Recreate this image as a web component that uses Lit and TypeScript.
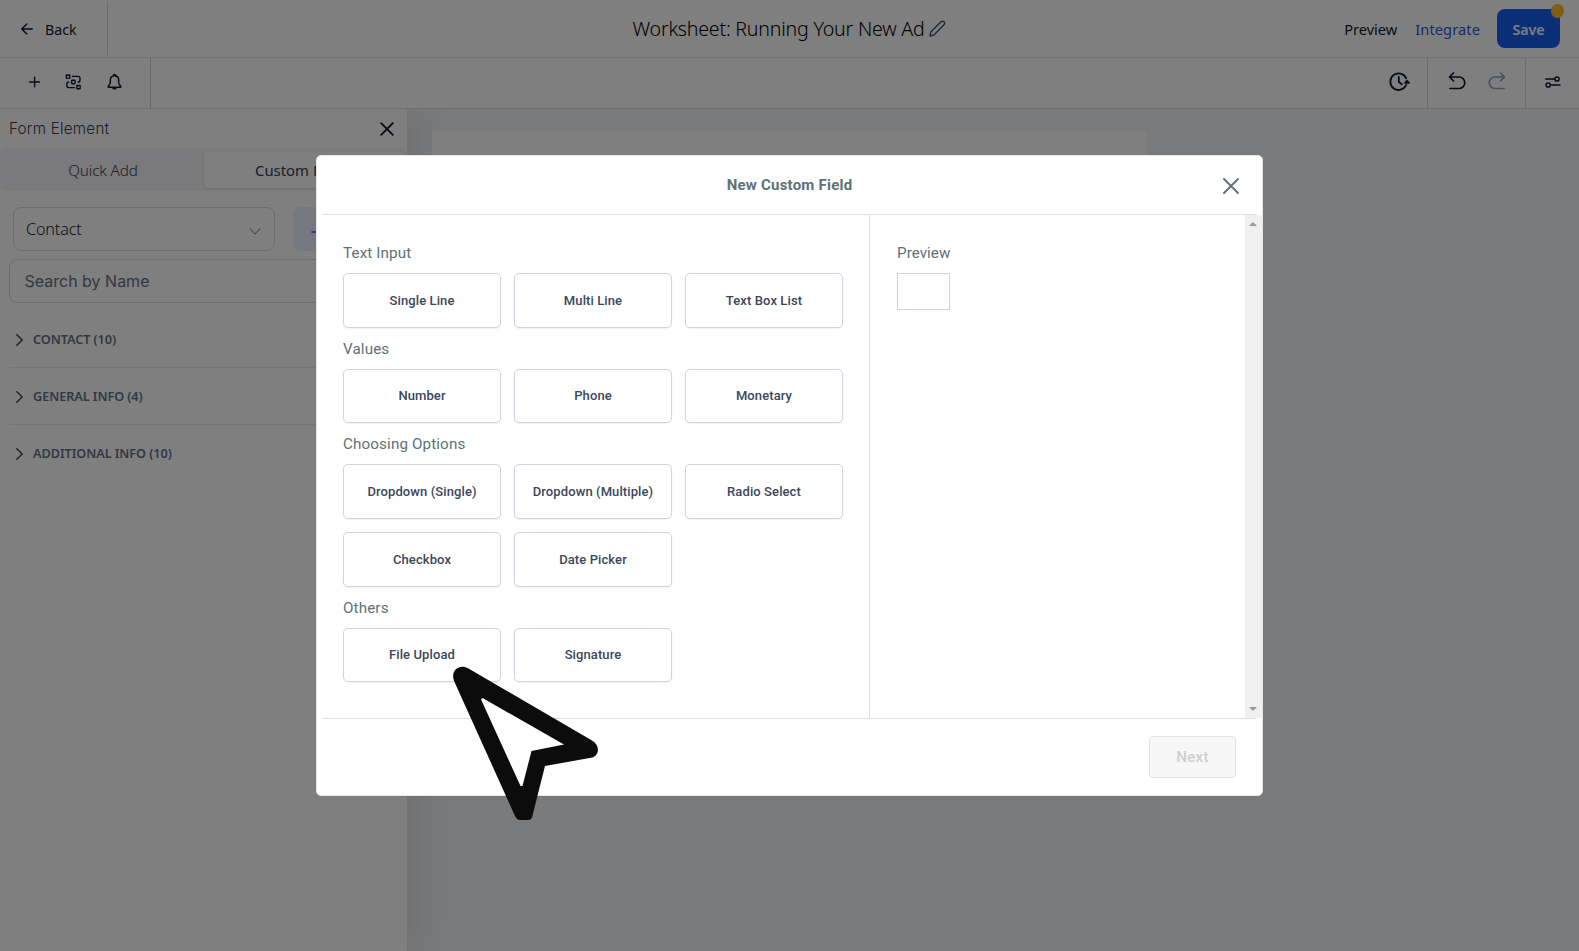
import { LitElement, html, css, svg } from "lit";
import { customElement } from "lit/decorators.js";

const SECTIONS: { title: string; items: string[] }[] = [
  { title: "Text Input", items: ["Single Line", "Multi Line", "Text Box List"] },
  { title: "Values", items: ["Number", "Phone", "Monetary"] },
  { title: "Choosing Options", items: ["Dropdown (Single)", "Dropdown (Multiple)", "Radio Select", "Checkbox", "Date Picker"] },
  { title: "Others", items: ["File Upload", "Signature"] },
];

const GROUPS = ["CONTACT (10)", "GENERAL INFO (4)", "ADDITIONAL INFO (10)"];

const icon = (w: number, h: number, body: unknown, sw = 1.7) => html`<svg width=${w} height=${h} viewBox="0 0 ${w} ${h}" fill="none" stroke="currentColor" stroke-width=${sw} stroke-linecap="round" stroke-linejoin="round">${body}</svg>`;

@customElement("top-bar")
class TopBar extends LitElement {
  static styles = css`
    :host { display: grid; grid-template-columns: 1fr auto 1fr; height: 57px; border-bottom: 1px solid #e4e4e6; background: #fff; color: #101828; font: 15px "Noto Sans", sans-serif; }
    .back { display: flex; align-items: center; gap: 12px; width: 108px; box-sizing: border-box; padding: 1px 0 0 21px; height: 53px; margin-top: 2px; border-right: 1px solid #d9d9dc; font-size: 14.2px; }
    .back svg { margin-top: -1px; }
    .title { display: flex; align-items: center; gap: 5px; font-size: 19.6px; font-weight: 340; color: #000; padding-bottom: 1px; letter-spacing: -0.22px; }
    .title svg { color: #475467; }
    .actions { display: flex; justify-content: flex-end; align-items: center; padding-right: 19px; font-size: 14.6px; padding-top: 1px; }
    .link { color: #2a55e0; margin: 0 17px 0 18px; letter-spacing: .1px; }
    .save { position: relative; width: 63px; height: 39px; box-sizing: border-box; border-radius: 8px; background: #155eef; color: #fff; display: grid; place-items: center; font-weight: 600; font-size: 14.2px; padding-top: 2px; margin-top: -2px; }
    .dot { position: absolute; right: -4px; top: -5px; width: 13px; height: 14px; border-radius: 50%; background: #fdbf22; }
  `;
  render() {
    return html`
      <div class="back">${icon(12, 12, svg`<path d="M11.3 6H.8M5.8 1 .8 6l5 5"/>`, 1.5)}<span>Back</span></div>
      <div class="title"><span>Worksheet: Running Your New Ad</span>
        ${icon(17, 17, svg`<path d="M1 16l.8-4L12 1.8a2 2 0 0 1 3 3L5 15z"/>`, 1.4)}</div>
      <div class="actions"><span>Preview</span><span class="link">Integrate</span><span class="save">Save<i class="dot"></i></span></div>`;
  }
}

@customElement("tool-bar")
class ToolBar extends LitElement {
  static styles = css`
    :host { display: flex; justify-content: space-between; height: 50px; border-bottom: 1px solid #d9d9dc; background: #fff; color: #101828; }
    .group { display: flex; }
    .cell { display: flex; align-items: center; box-sizing: border-box; }
    .add { width: 151px; padding: 0 28px 2px 29px; gap: 25px; border-right: 1px solid #d0d0d4; }
    .history { width: 58px; padding-left: 20px; padding-bottom: 3px; }
    .undo { width: 99px; padding: 0 19px 4px 20px; justify-content: space-between; border: solid #d9d9dc; border-width: 0 1px; }
    .opts { width: 53px; padding-left: 19px; padding-bottom: 2px; }
    .off { color: #98a2b3; display: flex; }
  `;
  render() {
    return html`
      <div class="group"><div class="cell add">
        ${icon(12, 12, svg`<path d="M6 .8v10.4M.8 6h10.4"/>`, 1.5)}
        ${icon(18, 18, svg`<rect x="1.500" y="1.500" width="3.600" height="3.600" rx=".4"/><rect x="7.100" y="7.200" width="3.600" height="3.600" rx=".4"/><rect x="12.700" y="12.700" width="3.600" height="3.600" rx=".4"/><path d="M8 3h6q2 0 2 2v2q0 2-2 2M4 9q-2 0-2 2v2q0 2 2 2h6"/>`, 1.5)}
        ${icon(16, 18, svg`<path d="M8 2.200C5 2.200 3.500 4.500 3.500 7v2.800c0 1.500-2.200 3-2.200 4.700h13.400c0-1.700-2.200-3.200-2.200-4.700V7C12.500 4.500 11 2.200 8 2.200zM6.800 1.600q1.200-1 2.400 0M6 15.200q2 2.400 4 0"/>`, 1.6)}
      </div></div>
      <div class="group">
        <div class="cell history">${icon(21, 20, svg`<path d="M17.200 6.300A8.300 8.300 0 1 0 17.200 13M9.800 5v5l3 2.200M16 10.800l2-2 2 2z"/>`, 1.8)}</div>
        <div class="cell undo">
          ${icon(18, 18, svg`<path d="M5.500 1 1.500 5l4 4M1.800 5h9.200a5.500 5.500 0 0 1 0 11.500H2"/>`)}
          <span class="off">${icon(18, 18, svg`<path d="M12.500 1l4 4-4 4M16.200 5H7a5.500 5.500 0 0 0 0 11.500h9"/>`)}</span>
        </div>
        <div class="cell opts">${icon(16, 12, svg`<path d="M.8 3h9M6 9h9"/><circle cx="12" cy="3" r="2.100"/><circle cx="3.200" cy="9" r="2.100"/>`, 1.5)}</div>
      </div>`;
  }
}

@customElement("element-panel")
class ElementPanel extends LitElement {
  static styles = css`
    :host { display: block; width: 407px; flex: none; background: #fff; box-shadow: 0 0 40px rgba(30, 40, 60, .14); font: 15px "Noto Sans", sans-serif; color: #344054; }
    .head { display: flex; justify-content: space-between; align-items: center; height: 39px; padding: 0 13px 0 9px; }
    .name { font: 300 15.2px Inter, sans-serif; letter-spacing: .25px; }
    .head svg { color: #101828; }
    .tabs { display: grid; grid-template-columns: 204px 1fr; height: 43px; background: #f5f5f9; border-radius: 6px; box-sizing: border-box; padding: 4px 3px 3px 0; text-align: center; line-height: 36px; font-size: 15.2px; font-weight: 340; }
    .tabs > :first-child { padding-left: 2px; letter-spacing: -.1px; }
    .tabs > .active { background: #fff; border-radius: 4px; font-weight: 450; font-size: 14.9px; letter-spacing: 0; box-shadow: 0 1px 2px rgba(16, 24, 40, .12); }
    .row { display: flex; gap: 18px; padding: 16px 12px 8px 13px; height: 44px; }
    .select { display: flex; justify-content: space-between; align-items: center; box-sizing: border-box; width: 262px; padding: 0 13px 0 12px; border: 1px solid #d9d9d9; border-radius: 8px; font-size: 16.2px; font-weight: 340; letter-spacing: -.15px; color: #222; }
    .select svg { color: #999; margin-top: 5px; }
    .plus { flex: 1; background: #eaf1fd; border-radius: 8px; color: #155eef; padding: 15px 18px; }
    .search { margin: 0 9px; height: 44px; box-sizing: border-box; border: 1px solid #d9d9d9; border-radius: 8px; padding-left: 14.500px; font: 16px/43px Inter, sans-serif; color: #667085; }
    .list { padding: 8px 9px; }
    .item { display: flex; align-items: center; gap: 10px; height: 56px; padding-left: 7px; border-bottom: 1px solid #e9e9ec; font-size: 12.7px; font-weight: 560; letter-spacing: -.07px; color: #667085; }
    .item:last-child { border: 0; }
    .item svg { color: #344054; margin-top: 2px; }
  `;
  render() {
    return html`
      <div class="head"><span class="name">Form Element</span>${icon(14, 14, svg`<path d="M1.200 1.200l11.600 11.600M12.800 1.200 1.200 12.800"/>`, 1.9)}</div>
      <div class="tabs"><div>Quick Add</div><div class="active">Custom Fields</div></div>
      <div class="row"><div class="select">Contact${icon(12, 7, svg`<path d="M1 .8l5 5 5-5"/>`, 1.1)}</div>
        <div class="plus">${icon(12, 12, svg`<path d="M6 1v10M1 6h10"/>`, 1.4)}</div></div>
      <div class="search">Search by Name</div>
      <div class="list">${GROUPS.map(g => html`<div class="item">${icon(7, 12, svg`<path d="M.8 .8 6.200 6 .8 11.200"/>`, 1.4)}<span>${g}</span></div>`)}</div>`;
  }
}

@customElement("field-dialog")
class FieldDialog extends LitElement {
  static styles = css`
    :host { display: flex; flex-direction: column; box-sizing: border-box; width: 947px; height: 641px; background: #fff; border: 1px solid #e4e6ea; border-radius: 5px; font-family: Roboto, sans-serif; color: #607179; }
    .head { display: grid; grid-template-columns: 1fr auto 1fr; align-items: center; height: 58px; margin: 0 6px; border-bottom: 1px solid #dcdfe3; }
    .title { grid-column: 2; font-weight: 700; font-size: 15px; color: #607179; letter-spacing: .22px; }
    .close { justify-self: end; padding: 2px 17px 0 0; display: flex; }
    .body { display: flex; height: 503px; }
    .fields { width: 553px; box-sizing: border-box; padding: 17px 26px; border-right: 1px solid #dcdfe6; }
    .label { height: 41px; line-height: 42px; font-size: 15.2px; letter-spacing: .13px; }
    .grid { display: grid; grid-template-columns: repeat(3, 158px); gap: 13.500px 13px; }
    .field { height: 54.500px; box-sizing: border-box; border: 1px solid #d0d2df; border-radius: 5px; display: grid; place-items: center; font-size: 13px; font-weight: 500; color: #3b475c; letter-spacing: .1px; box-shadow: 0 1px 2px rgba(16, 24, 40, .06); }
    .preview { flex: 1; padding: 17px 27px; }
    .preview .label { letter-spacing: .05px; }
    .sample { width: 53px; height: 37px; box-sizing: border-box; border: 1px solid #d0d2df; }
    .scroll { width: 17px; background: #f0f0f0; display: flex; flex-direction: column; justify-content: space-between; align-items: center; padding: 7px 1px 7px 0; box-sizing: border-box; }
    .scroll svg { fill: #999; display: block; }
    .foot { flex: 1; margin: 0 6px; border-top: 1px solid #dcdfe3; display: flex; justify-content: flex-end; padding: 17px 20px 0; }
    .next { width: 87px; height: 42px; box-sizing: border-box; border: 1px solid #e2e2e2; border-radius: 4px; background: #f7f7f7; color: #cdcfd0; display: grid; place-items: center; font-size: 15px; font-weight: 500; letter-spacing: .3px; }
  `;
  render() {
    return html`
      <div class="head"><span class="title">New Custom Field</span><span class="close">${icon(16, 16, svg`<path d="M1 1l14 14M15 1 1 15"/>`, 1.9)}</span></div>
      <div class="body">
        <div class="fields">${SECTIONS.map(s => html`<div class="label">${s.title}</div><div class="grid">${s.items.map(i => html`<div class="field">${i}</div>`)}</div>`)}</div>
        <div class="preview"><div class="label">Preview</div><div class="sample"></div></div>
        <div class="scroll"><svg width="8" height="4"><path d="M0 4 4 0l4 4z"/></svg><svg width="8" height="4"><path d="M0 0l4 4 4-4z"/></svg></div>
      </div>
      <div class="foot"><span class="next">Next</span></div>`;
  }
}

@customElement("app-root")
class AppRoot extends LitElement {
  static styles = css`
    :host { display: flex; flex-direction: column; height: 951px; overflow: hidden; position: relative; }
    .main { flex: 1; display: flex; background: #f2f4f7; overflow: hidden; }
    .paper { width: 715px; margin: 22px 0 0 25px; background: #fff; height: 500px; }
    .shade { position: absolute; inset: 0; background: rgba(0, 0, 0, .5); display: grid; place-items: center; }
    .cursor { position: absolute; left: 452px; top: 665px; }
  `;
  render() {
    return html`
      <top-bar></top-bar><tool-bar></tool-bar>
      <div class="main"><element-panel></element-panel><div class="paper"></div></div>
      <div class="shade"><field-dialog></field-dialog></div>
      <svg class="cursor" width="148" height="156" viewBox="452 665 148 156">
        <path fill="#0c0c0c" d="M468.500 668.500 592 740.500C601 746 599 756 591 757.800L545 766 532 817.500Q531 820 528 820H520Q517 820 515 816L454.500 682C449.500 671 459 663 468.500 668.500Z"/>
        <path fill="#fff" d="M483 698.200 564 744.500 531.500 751 522.500 786H520.500L481.300 700Q481 698 483 698.200Z"/>
      </svg>`;
  }
}
